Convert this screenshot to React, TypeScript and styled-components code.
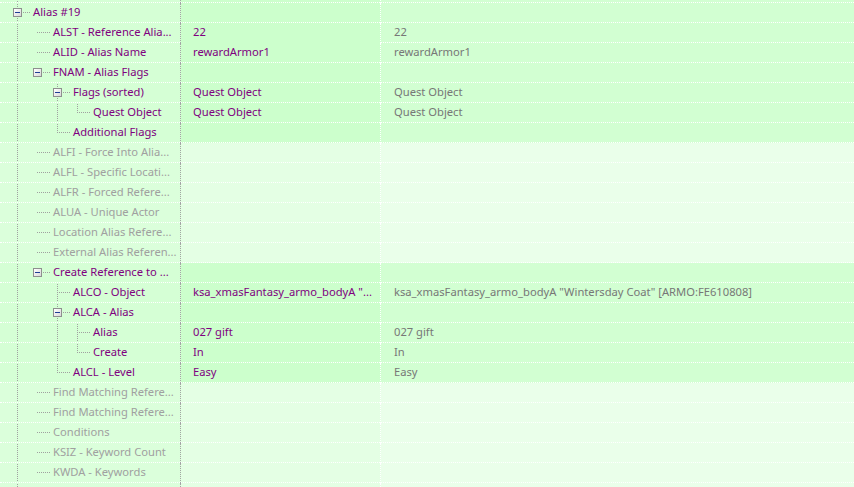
import React from 'react';
import styled, { createGlobalStyle } from 'styled-components';

const GlobalStyle = createGlobalStyle`
  html, body {
    margin: 0;
    padding: 0;
    background: #e6ffe6;
  }
  body {
    font-family: "Noto Sans", "DejaVu Sans", sans-serif;
    font-size: 11.2px;
  }
`;

// '|' line, 'T' tee, 'L' last child, '-' connector only, ' ' empty,
// '+' expanded box with sibling line, 'b' expanded box alone
type Glyph = '|' | 'T' | 'L' | '-' | '+' | 'b' | ' ';

type Field = {
  name: string;
  guides: Glyph[];
  missing?: boolean;
  value?: string;
  master?: string;
  focused?: boolean;
};

const fields: Field[] = [
  { name: 'Alias #19', guides: ['+'] },
  { name: 'ALST - Reference Alia...', guides: ['|', '-'], value: '22', master: '22', focused: true },
  { name: 'ALID - Alias Name', guides: ['|', '-'], value: 'rewardArmor1', master: 'rewardArmor1' },
  { name: 'FNAM - Alias Flags', guides: ['|', 'b'] },
  { name: 'Flags (sorted)', guides: ['|', ' ', '+'], value: 'Quest Object', master: 'Quest Object' },
  { name: 'Quest Object', guides: ['|', ' ', '|', 'L'], value: 'Quest Object', master: 'Quest Object' },
  { name: 'Additional Flags', guides: ['|', ' ', 'L'] },
  { name: 'ALFI - Force Into Alia...', guides: ['|', '-'], missing: true },
  { name: 'ALFL - Specific Locati...', guides: ['|', '-'], missing: true },
  { name: 'ALFR - Forced Refere...', guides: ['|', '-'], missing: true },
  { name: 'ALUA - Unique Actor', guides: ['|', '-'], missing: true },
  { name: 'Location Alias Refere...', guides: ['|', '-'], missing: true },
  { name: 'External Alias Referen...', guides: ['|', '-'], missing: true },
  { name: 'Create Reference to ...', guides: ['|', 'b'] },
  {
    name: 'ALCO - Object',
    guides: ['|', ' ', 'T'],
    value: 'ksa_xmasFantasy_armo_bodyA "...',
    master: 'ksa_xmasFantasy_armo_bodyA "Wintersday Coat" [ARMO:FE610808]',
  },
  { name: 'ALCA - Alias', guides: ['|', ' ', '+'] },
  { name: 'Alias', guides: ['|', ' ', '|', 'T'], value: '027 gift', master: '027 gift' },
  { name: 'Create', guides: ['|', ' ', '|', 'L'], value: 'In', master: 'In' },
  { name: 'ALCL - Level', guides: ['|', ' ', 'L'], value: 'Easy', master: 'Easy' },
  { name: 'Find Matching Refere...', guides: ['|', '-'], missing: true },
  { name: 'Find Matching Refere...', guides: ['|', '-'], missing: true },
  { name: 'Conditions', guides: ['|', '-'], missing: true },
  { name: 'KSIZ - Keyword Count', guides: ['|', '-'], missing: true },
  { name: 'KWDA - Keywords', guides: ['|', '-'], missing: true },
  { name: '', guides: ['|', '-'], missing: true },
];

const TreeView = styled.div`
  width: 854px;
  height: 487px;
  overflow: hidden;
`;

const Row = styled.div<{ $stub?: boolean }>`
  display: grid;
  grid-template-columns: 181px 200px 1fr;
  height: ${(p) => (p.$stub ? '3px' : '20px')};
  overflow: hidden;
`;

const Cell = styled.div<{ $noLine?: boolean }>`
  position: relative;
  box-sizing: border-box;
  height: 100%;
  overflow: hidden;
  white-space: nowrap;
  line-height: 18px;

  &::after {
    content: '';
    position: absolute;
    left: 0;
    right: 0;
    bottom: 0;
    border-bottom: 1px dotted ${(p) => (p.$noLine ? 'transparent' : '#ffffff')};
  }
`;

const NameCell = styled(Cell)<{ $missing?: boolean }>`
  display: flex;
  align-items: flex-start;
  padding-left: 7px;
  border-right: 1px dotted #a4a4a4;
  background: ${(p) => (p.$missing ? '#dbffdb' : '#d5ffd5')};
  color: ${(p) => (p.$missing ? '#a0a0a0' : '#800080')};
`;

const ValueCell = styled(Cell)<{ $missing?: boolean }>`
  padding-left: 12px;
  border-right: 1px dotted #ffffff;
  background: ${(p) => (p.$missing ? '#e4ffe4' : '#ccffcc')};
  color: #800080;
`;

const MasterCell = styled(Cell)<{ $missing?: boolean }>`
  padding-left: 13px;
  background: ${(p) => (p.$missing ? '#eaffea' : '#d2ffd2')};
  color: #777777;
`;

const Label = styled.span`
  margin-left: 2px;
`;

const GuideSvg = styled.svg`
  flex: none;
  display: block;
`;

const dotsV = (x: number, y0: number, y1: number) => {
  const out: React.ReactNode[] = [];
  for (let y = y0; y <= y1; y += 2) out.push(<rect key={`v${x}-${y}`} x={x} y={y} width={1} height={1} />);
  return out;
};

const dotsH = (y: number, x0: number, x1: number) => {
  const out: React.ReactNode[] = [];
  for (let x = x0; x <= x1; x += 2) out.push(<rect key={`h${y}-${x}`} x={x} y={y} width={1} height={1} />);
  return out;
};

function TreeGuide({ glyph, last }: { glyph: Glyph; last: boolean }) {
  const w = last ? 24 : 20;
  const boxed = glyph === '+' || glyph === 'b';
  return (
    <GuideSvg width={w} height={20} viewBox={`0 0 ${w} 20`} shapeRendering="crispEdges">
      <g fill="#a0a0a0">
        {glyph === '|' && dotsV(10, 1, 19)}
        {glyph === 'T' && [...dotsV(10, 1, 19), ...dotsH(9, 12, 22)]}
        {glyph === 'L' && [...dotsV(10, 1, 9), ...dotsH(9, 12, 22)]}
        {glyph === '-' && dotsH(9, 10, 22)}
        {glyph === '+' && [...dotsV(10, 1, 4), ...dotsV(10, 15, 19)]}
        {boxed && dotsH(9, 16, 22)}
      </g>
      {boxed && (
        <g>
          <defs>
            <linearGradient id="btnFill" x1="0" y1="0" x2="1" y2="1">
              <stop offset="0" stopColor="#ffffff" />
              <stop offset="1" stopColor="#d8d8d8" />
            </linearGradient>
          </defs>
          <rect x={6} y={5} width={9} height={9} fill="#8e8f8f" />
          <rect x={7} y={6} width={7} height={7} fill="url(#btnFill)" />
          <rect x={8} y={9} width={5} height={1} fill="#1f3e94" />
        </g>
      )}
    </GuideSvg>
  );
}

function FieldRow({ field }: { field: Field }) {
  const { guides, missing } = field;
  return (
    <Row>
      <NameCell $missing={missing}>
        {guides.map((g, i) => (
          <TreeGuide key={i} glyph={g} last={i === guides.length - 1} />
        ))}
        <Label>{field.name}</Label>
      </NameCell>
      <ValueCell $missing={missing} $noLine={field.focused}>
        {field.value}
      </ValueCell>
      <MasterCell $missing={missing}>{field.master}</MasterCell>
    </Row>
  );
}

export default function App() {
  return (
    <>
      <GlobalStyle />
      <TreeView>
        <Row $stub>
          <NameCell>
            <TreeGuide glyph="|" last={false} />
          </NameCell>
          <ValueCell />
          <MasterCell />
        </Row>
        {fields.map((f, i) => (
          <FieldRow key={i} field={f} />
        ))}
      </TreeView>
    </>
  );
}
